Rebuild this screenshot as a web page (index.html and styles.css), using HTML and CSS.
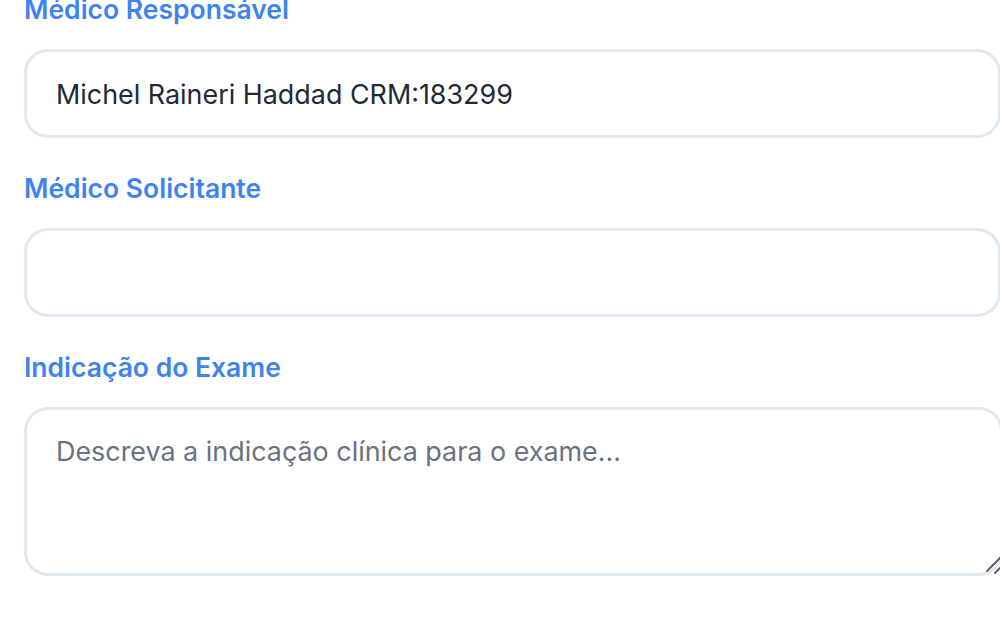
FILE: index.html
```html
<!DOCTYPE html>
<html lang="pt-BR">
<head>
<meta charset="utf-8">
<title>Formulário</title>
<link rel="stylesheet" href="styles.css">
</head>
<body>
<form class="form">
  <div class="field">
    <label class="label" for="resp">Médico Responsável</label>
    <input class="input" id="resp" type="text" value="Michel Raineri Haddad CRM:183299">
  </div>
  <div class="field">
    <label class="label" for="sol">Médico Solicitante</label>
    <input class="input" id="sol" type="text">
  </div>
  <div class="field">
    <label class="label" for="ind">Indicação do Exame</label>
    <div class="textarea-wrap">
      <textarea class="textarea" id="ind" placeholder="Descreva a indicação clínica para o exame..."></textarea>
      <svg class="grip" width="20" height="20" viewBox="0 0 20 20" aria-hidden="true">
        <line x1="3" y1="14" x2="16" y2="1" stroke="#5f6368" stroke-width="2" stroke-linecap="round"/>
        <line x1="11" y1="16" x2="19" y2="8" stroke="#5f6368" stroke-width="2" stroke-linecap="round"/>
      </svg>
    </div>
  </div>
</form>
</body>
</html>
```

FILE: styles.css
```css
html, body {
  margin: 0;
  padding: 0;
  background: #ffffff;
  overflow: hidden;
}

body {
  font-family: Inter, "Noto Sans", sans-serif;
  width: 1000px;
  height: 626px;
}

.form {
  display: flex;
  flex-direction: column;
  gap: 34px;
  margin-top: -7px;
  padding-left: 24px;
}

.field {
  display: flex;
  flex-direction: column;
  gap: 24px;
}

.label {
  font-size: 26.5px;
  line-height: 32px;
  font-weight: 600;
  color: #3f83f2;
}

.input,
.textarea {
  box-sizing: border-box;
  width: 977px;
  border: 3px solid #e2e8f0;
  border-radius: 24px;
  background: #ffffff;
  font-family: Inter, "Noto Sans", sans-serif;
  font-size: 26.9px;
  color: #1f2937;
  outline: none;
  margin: 0;
}

.input {
  height: 89px;
  padding: 0 29px;
  line-height: 34px;
}

.textarea-wrap {
  position: relative;
  width: 979px;
}

.textarea {
  width: 979px;
  height: 169px;
  padding: 23px 29px;
  line-height: 36px;
  resize: none;
  display: block;
}

.textarea::placeholder {
  color: #6b7280;
  opacity: 1;
}

.grip {
  position: absolute;
  left: 960px;
  top: 150px;
}
```
